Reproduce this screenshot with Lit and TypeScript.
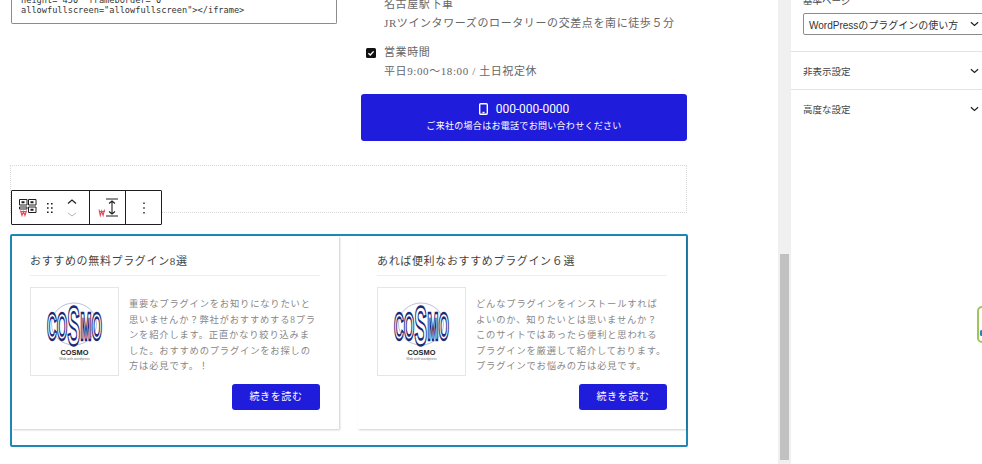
import { LitElement, html, css, svg } from "lit";
import { customElement } from "lit/decorators.js";

const logo = svg`<svg class="logo" viewBox="0 0 87 87" aria-hidden="true">
  <ellipse cx="43" cy="36" rx="22.5" ry="21" fill="none" stroke="#8d96c4" stroke-width=".6"/>
  <text transform="translate(16 52) scale(.55 1.62)" font-family="'Liberation Sans',sans-serif" font-weight="700" font-size="24" fill="#fff" stroke="#1b2a78" stroke-width="1.5" textLength="100" lengthAdjust="spacingAndGlyphs">CO<tspan font-size="34" dy="3">S</tspan><tspan dy="-3">MO</tspan></text>
  <text x="43.5" y="67" text-anchor="middle" font-family="'Liberation Sans',sans-serif" font-weight="700" font-size="7.4" fill="#222">COSMO</text>
  <text x="43.5" y="72" text-anchor="middle" font-family="'Liberation Sans',sans-serif" font-size="3.4" fill="#777">Web with wordpress</text>
</svg>`;

const chevron = svg`<svg class="chev" viewBox="0 0 10 6" aria-hidden="true"><path d="M1 1l4 3.6L9 1" fill="none" stroke="#1e1e1e" stroke-width="1.3"/></svg>`;

@customElement("app-root")
export class AppRoot extends LitElement {
  static styles = css`
    :host {
      display: block;
      width: 982px;
      height: 464px;
      overflow: hidden;
      position: relative;
      background: #fff;
      font-family: "Liberation Serif", "Noto Sans CJK JP", serif;
      color: #555;
    }
    .page { display: flex; height: 464px; }
    .main { width: 778px; flex: none; padding-left: 10px; box-sizing: border-box; }
    .top {
      display: grid;
      grid-template-columns: 326px 326px;
      column-gap: 24px;
      margin: -20px 0 0 1px;
      height: 161px;
    }
    .code {
      height: 44px;
      box-sizing: border-box;
      border: 1px solid #8c8c8c;
      border-width: 0 1px 1px 1px;
      border-radius: 0 0 2px 2px;
      padding: 15px 9px 0;
      font: 8.65px/10px "DejaVu Sans Mono", monospace;
      color: #333;
      white-space: pre;
      overflow: hidden;
    }
    .info { padding-top: 15px; font-size: 11px; line-height: 19px; letter-spacing: .6px; color: #666; }
    .item { display: flex; padding-left: 5px; gap: 8px; margin-bottom: 10px; }
    .item > div { white-space: nowrap; }
    .mark { width: 10px; height: 10px; flex: none; margin-top: 4.5px; }
    .mark.none { visibility: hidden; }
    .cta {
      margin-top: 13px;
      height: 47px;
      padding-bottom: 2px;
      box-sizing: border-box;
      background: #201cdc;
      border-radius: 3px;
      color: #fff;
      display: flex;
      flex-direction: column;
      align-items: center;
      justify-content: center;
      letter-spacing: 0;
    }
    .phone { display: flex; align-items: center; gap: 8px; font: 12px/17px Roboto, sans-serif; letter-spacing: -.05px; }
    .phone svg { width: 9px; height: 12px; }
    .cta small { font: 9px/14px "Noto Sans CJK JP", sans-serif; letter-spacing: .3px; margin-top: 1px; }
    .spacer {
      position: relative;
      margin-top: 24px;
      width: 677px;
      height: 48px;
      box-sizing: border-box;
      border: 1px dotted #d8d8d8;
    }
    .toolbar {
      position: absolute;
      left: 0;
      top: 24px;
      height: 35px;
      box-sizing: border-box;
      display: flex;
      background: #fff;
      border: 1px solid #1e1e1e;
      border-radius: 1px;
    }
    .group { display: flex; align-items: center; border-right: 1px solid #1e1e1e; }
    .group:last-child { border-right: 0; }
    .g1 { width: 77px; } .g2 { width: 35px; } .g3 { width: 35px; justify-content: center; }
    .qr { width: 18px; height: 18px; margin-left: 7px; }
    .drag { width: 8px; height: 12px; margin-left: 9px; }
    .mover { width: 10px; height: 20px; margin-left: 13px; }
    .spacing { width: 26px; height: 20px; margin-left: 8px; }
    .dots { width: 4px; height: 12px; }
    .frame {
      margin-top: 21px;
      width: 678px;
      height: 213px;
      box-sizing: border-box;
      border: 2px solid #1f87b6;
      border-radius: 2px;
      display: grid;
      grid-template-columns: 327px 328px;
      column-gap: 19px;
      align-content: start;
    }
    .card {
      height: 193px;
      box-sizing: border-box;
      padding: 0 19px;
      background: #fff;
      box-shadow: 1px 1px 2px rgba(0, 0, 0, .2);
    }
    .card:first-child { padding-left: 18px; }
    .card h3 {
      margin: 0;
      height: 40px;
      box-sizing: border-box;
      padding-top: 17px;
      border-bottom: 1px solid #eee;
      font-size: 11px;
      line-height: 17px;
      font-weight: 400;
      letter-spacing: .65px;
      color: #444;
      white-space: nowrap;
    }
    .row { display: flex; margin-top: 11px; gap: 10px; }
    .thumb { width: 89px; height: 89px; box-sizing: border-box; border: 1px solid #e6e6e6; flex: none; }
    .logo { display: block; width: 87px; height: 87px; }
    .row p {
      margin: 10px 0 0;
      font-size: 9.3px;
      line-height: 15.5px;
      letter-spacing: .8px;
      color: #888;
      white-space: nowrap;
    }
    .more {
      display: block;
      margin: 8px 0 0 auto;
      width: 88px;
      height: 26px;
      background: #201cdc;
      border-radius: 3px;
      color: #fff;
      font-size: 10px;
      line-height: 26px;
      text-align: center;
      letter-spacing: .6px;
    }
    .track { width: 13px; flex: none; background: #f0f0f0; padding: 254px 2px 0; box-sizing: border-box; }
    .thumbbar { height: 206px; width: 9px; background: #c1c1c1; }
    .side {
      flex: 1;
      min-width: 0;
      font-family: "Noto Sans CJK JP", sans-serif;
      font-size: 9.5px;
      color: #444;
      padding-top: 0;
    }
    .sec { padding: 0 0 0 12px; border-bottom: 1px solid #e3e3e3; }
    .first { box-sizing: border-box; margin-top: -6px; height: 58px; overflow: hidden; }
    .label { line-height: 13px; height: 13px; margin-top: 0; }
    .select {
      margin-top: 6px;
      height: 22px;
      width: 190px;
      box-sizing: border-box;
      border: 1px solid #8c8c8c;
      border-radius: 2px;
      display: flex;
      align-items: center;
      justify-content: space-between;
      padding: 0 13px 0 5px;
      font-family: "Liberation Sans", "Noto Sans CJK JP", sans-serif;
      font-size: 10px;
      color: #333;
      white-space: nowrap;
    }
    .panel {
      height: 38px;
      box-sizing: border-box;
      display: flex;
      align-items: center;
      justify-content: space-between;
      padding-right: 3px;
    }
    .panel.last { border-bottom: 0; }
    .chev { width: 9px; height: 6px; flex: none; }
    .help {
      position: absolute;
      right: -14px;
      top: 306px;
      width: 19px;
      height: 37px;
      box-sizing: border-box;
      border: 2px solid #9cc65c;
      border-radius: 5px;
      background: #fff;
    }
    .help i { display: block; width: 3px; height: 6px; margin: 22px 0 0 1px; background: #1f87b6; border-radius: 2px; }
  `;

  private card(title: string, lines: string[]) {
    return html`<article class="card">
      <h3>${title}</h3>
      <div class="row">
        <div class="thumb">${logo}</div>
        <p>${lines.map((l) => html`${l}<br />`)}</p>
      </div>
      <a class="more">続きを読む</a>
    </article>`;
  }

  render() {
    return html`<div class="page">
      <div class="main">
        <div class="top">
          <div class="code">height="450" frameborder="0"
allowfullscreen="allowfullscreen"&gt;&lt;/iframe&gt;</div>
          <div class="info">
            <div class="item">
              <svg class="mark none" viewBox="0 0 10 10"></svg>
              <div>名古屋駅下車<br />JRツインタワーズのロータリーの交差点を南に徒歩５分</div>
            </div>
            <div class="item">
              <svg class="mark" viewBox="0 0 10 10" aria-hidden="true">
                <rect width="10" height="10" rx="1.5" fill="#111" />
                <path d="M2.4 5.2l1.9 1.8 3.3-3.6" fill="none" stroke="#fff" stroke-width="1.4" />
              </svg>
              <div>営業時間<br />平日9:00〜18:00 / 土日祝定休</div>
            </div>
            <div class="cta">
              <div class="phone">
                <svg viewBox="0 0 9 12" aria-hidden="true">
                  <rect x=".7" y=".7" width="7.6" height="10.6" rx="1" fill="none" stroke="#fff" stroke-width="1.4" />
                  <rect x="3.5" y="8.8" width="2" height="1.4" fill="#fff" />
                </svg>
                <span>000-000-0000</span>
              </div>
              <small>ご来社の場合はお電話でお問い合わせください</small>
            </div>
          </div>
        </div>
        <div class="spacer">
          <div class="toolbar">
            <div class="group g1">
              <svg class="qr" viewBox="0 0 18 18" aria-hidden="true">
                <path d="M.5.5h7.5v5.5H.5zM9.5.5h7.5v5.5H9.5zM9.5 8h7.5v5.5H9.5zM.5 8h7.5v2H.5z" fill="none" stroke="#1e1e1e" stroke-width="1" />
                <path d="M2.5 2.3h3v2h-3zM11.5 2.3h3v2h-3zM11.5 9.8h3v2h-3z" fill="#1e1e1e" />
                <path d="M1.5 11.5l1.5 5 1.5-4 1.5 4 1.5-5M1.5 12.5h6" fill="none" stroke="#e2495b" stroke-width="1.1" />
              </svg>
              <svg class="drag" viewBox="0 0 8 12" aria-hidden="true">
                <path d="M1 1h1.6v1.6H1zM5 1h1.6v1.6H5zM1 5.2h1.6v1.6H1zM5 5.2h1.6v1.6H5zM1 9.4h1.6V11H1zM5 9.4h1.6V11H5z" fill="#1e1e1e" />
              </svg>
              <svg class="mover" viewBox="0 0 10 20" aria-hidden="true">
                <path d="M1 5.5l4-3.5 4 3.5" fill="none" stroke="#1e1e1e" stroke-width="1.2" />
                <path d="M1 15l4 3 4-3" fill="none" stroke="#b5b5b5" stroke-width="1" />
              </svg>
            </div>
            <div class="group g2">
              <svg class="spacing" viewBox="0 0 26 20" aria-hidden="true">
                <path d="M8 1h12M8 18h12M14 3v13M11 5.5L14 3l3 2.5M11 13.5l3 2.5 3-2.5" fill="none" stroke="#1e1e1e" stroke-width="1.1" />
                <path d="M1 11.5l1.3 6 1.4-4.5 1.4 4.5 1.4-6M1 13.5h6" fill="none" stroke="#e2495b" stroke-width="1.1" />
              </svg>
            </div>
            <div class="group g3">
              <svg class="dots" viewBox="0 0 4 12" aria-hidden="true">
                <path d="M1.3.5h1.4v1.4H1.3zM1.3 5.3h1.4v1.4H1.3zM1.3 10.1h1.4v1.4H1.3z" fill="#1e1e1e" />
              </svg>
            </div>
          </div>
        </div>
        <div class="frame">
          ${this.card("おすすめの無料プラグイン8選", [
            "重要なプラグインをお知りになりたいと",
            "思いませんか？弊社がおすすめする8プラ",
            "ンを紹介します。正直かなり絞り込みま",
            "した。おすすめのプラグインをお探しの",
            "方は必見です。！",
          ])}
          ${this.card("あれば便利なおすすめプラグイン６選", [
            "どんなプラグインをインストールすれば",
            "よいのか、知りたいとは思いませんか？",
            "このサイトではあったら便利と思われる",
            "プラグインを厳選して紹介しております。",
            "プラグインでお悩みの方は必見です。",
          ])}
        </div>
      </div>
      <div class="track"><div class="thumbbar"></div></div>
      <aside class="side">
        <div class="sec first">
          <div class="label">基準ページ</div>
          <div class="select"><span>WordPressのプラグインの使い方</span>${chevron}</div>
        </div>
        <div class="sec panel"><span>非表示設定</span>${chevron}</div>
        <div class="sec panel last"><span>高度な設定</span>${chevron}</div>
      </aside>
    </div>
    <div class="help"><i></i></div>`;
  }
}
